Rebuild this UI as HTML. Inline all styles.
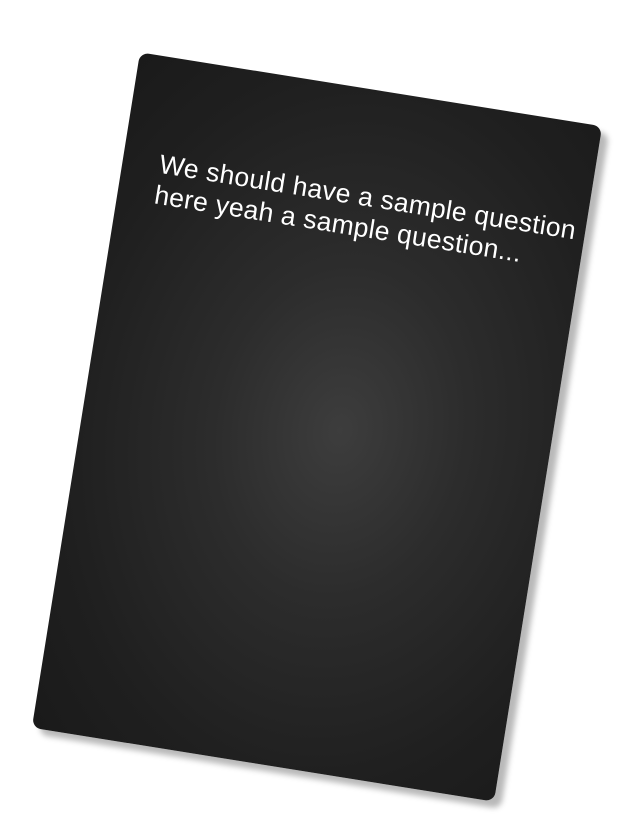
<!DOCTYPE html>
<html><head><meta charset="utf-8"><style>
html,body{margin:0;padding:0;background:#fff;width:635px;height:820px;overflow:hidden}
.card{position:absolute;left:83px;top:85px;width:468px;height:684px;
transform:rotate(9.1deg);transform-origin:center center;border-radius:9px;
background:radial-gradient(ellipse at 55% 50%,#3d3d3d 0%,#2c2c2c 35%,#1f1f1f 75%,#1a1a1a 100%);
box-shadow:8px 6px 6px rgba(0,0,0,0.28);}
.t{position:absolute;left:37px;top:92px;width:460px;color:#fff;white-space:nowrap;
font-family:"Liberation Sans",sans-serif;font-size:26.5px;line-height:31px;letter-spacing:0.3px}
</style></head><body>
<div class="card"><div class="t">We should have a sample question<br>here yeah a sample question...</div></div>
</body></html>
